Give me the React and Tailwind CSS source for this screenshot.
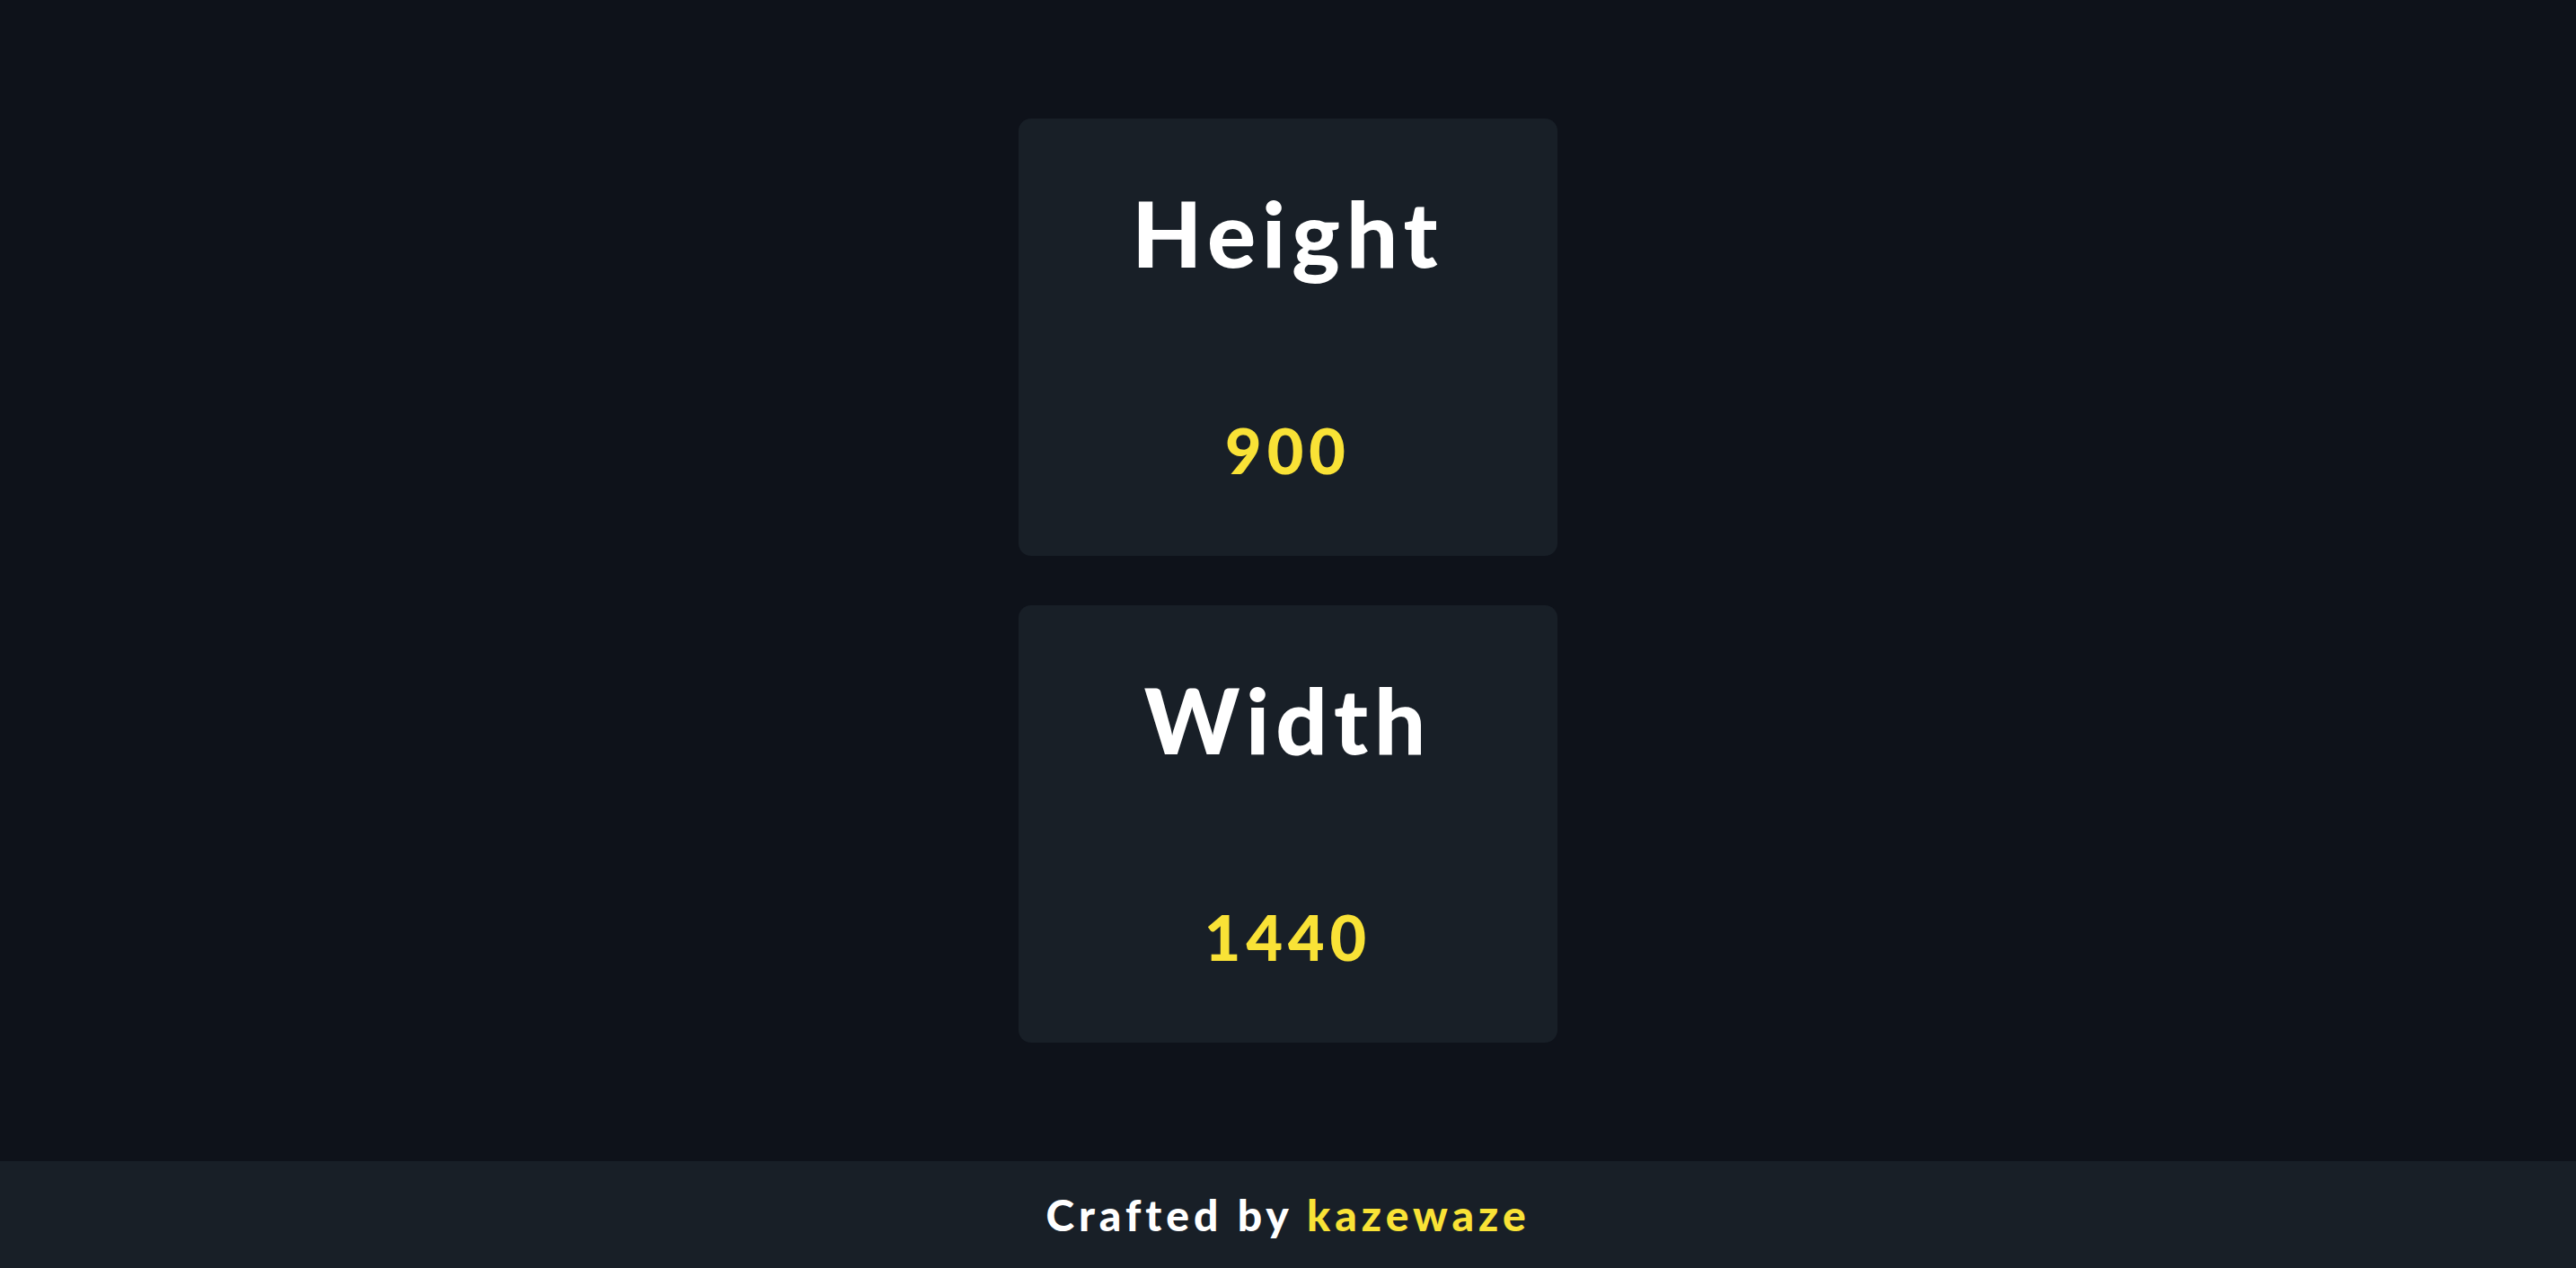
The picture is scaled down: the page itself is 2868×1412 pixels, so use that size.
export default function App() {
  const font = { fontFamily: "Lato, 'Noto Sans', sans-serif" };
  return (
    <div className="min-h-screen flex flex-col bg-[#0e121a]" style={font}>
      <main className="flex-1 flex flex-col items-center justify-center gap-[55px]">
        <div className="w-[600px] h-[487px] rounded-[14px] bg-[#181f27] flex flex-col items-center">
          <div className="mt-[62px] text-white font-black text-[101px] leading-[130px] tracking-[7px]">Height</div>
          <div className="mt-[137px] text-[#f9e236] font-black text-[70px] leading-[80px] tracking-[6px]">900</div>
        </div>
        <div className="w-[600px] h-[487px] rounded-[14px] bg-[#181f27] flex flex-col items-center">
          <div className="mt-[62px] text-white font-black text-[101px] leading-[130px] tracking-[7px]">Width</div>
          <div className="mt-[137px] text-[#f9e236] font-black text-[70px] leading-[80px] tracking-[6px]">1440</div>
        </div>
      </main>
      <footer className="h-[119px] bg-[#181f27] flex items-center justify-center">
        <span className="text-white font-black text-[48px] tracking-[5px]">
          Crafted by <span className="text-[#f9e236]">kazewaze</span>
        </span>
      </footer>
    </div>
  );
}
